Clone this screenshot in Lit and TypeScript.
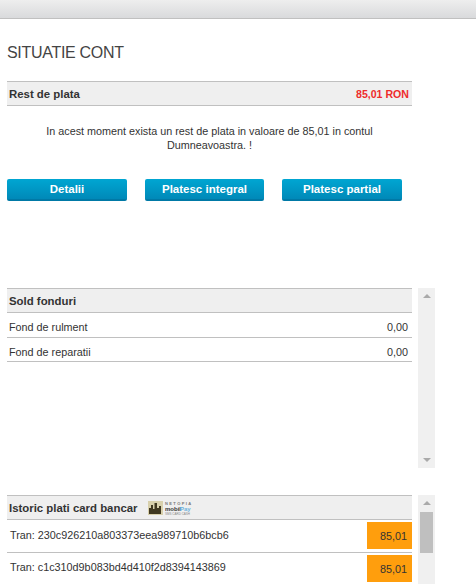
import { LitElement, html, css } from "lit";
import { customElement } from "lit/decorators.js";

@customElement("app-root")
export class AppRoot extends LitElement {
  static styles = css`
    :host { display: block; width: 476px; height: 584px; overflow: hidden; background: #fff; font-family: "Liberation Sans", Arial, sans-serif; font-size: 10px; color: #333; }
    .top { height: 18px; background: linear-gradient(#eeeeee, #d9dadc); border-bottom: 1px solid #c0c0c0; }
    .content { padding: 0 0 0 7px; width: 405px; }
    h1 { margin: 24px 0 0; height: 38px; font-weight: normal; font-size: 16px; letter-spacing: -0.3px; line-height: 19px; color: #444; }
    .head { height: 23px; display: flex; align-items: center; justify-content: space-between; padding: 0 3px 0 2px; background: #efefef; border-top: 1px solid #c0c0c0; border-bottom: 1px solid #c0c0c0; font-weight: bold; font-size: 11.4px; }
    .red { color: #ee2c2c; font-size: 10.6px; }
    .msg { margin: 18px 0 0; text-align: center; line-height: 14px; padding: 0 30px; font-size: 10.8px; }
    .btns { margin-top: 27px; display: flex; gap: 18px; }
    .btn { width: 120px; height: 22px; box-sizing: border-box; border-radius: 2px; background: linear-gradient(#00a6d2, #0089b8); border-bottom: 2px solid #0079a6; color: #fff; font-weight: bold; font-size: 11.5px; display: flex; align-items: center; justify-content: center; }
    .btn.mid { width: 119px; }
    .panel { display: grid; grid-template-columns: 405px 17px; column-gap: 6px; width: 428px; }
    .sold { margin-top: 87px; height: 180px; }
    .istoric { margin-top: 27px; height: 89px; }
    .row { box-sizing: border-box; height: 24px; padding: 5px 4px 0 2px; display: flex; align-items: center; justify-content: space-between; border-bottom: 1px solid #c0c0c0; font-size: 10.8px; }
    .row.first { height: 25px; padding-top: 4px; }
    .row.tran { height: 33px; padding: 2px 0 0 3px; align-items: flex-start; }
    .row.tran > .code { line-height: 27px; font-size: 10.8px; }
    .row.tran.second > .code { margin-top: -1px; }
    .amount { width: 45px; height: 27px; display: flex; align-items: center; justify-content: flex-end; padding-right: 5px; box-sizing: border-box; background: #ff9e0d; }
    .title { display: flex; align-items: center; gap: 10px; }
    .scroll { background: #f0f0f0; display: flex; flex-direction: column; justify-content: space-between; align-items: center; padding: 6px 0; box-sizing: border-box; position: relative; }
    .thumb { position: absolute; left: 2px; top: 17px; width: 13px; height: 41px; background: #bfbfbf; }
    svg { display: block; }
    .lg1 { font: bold 4px "Liberation Sans", sans-serif; letter-spacing: 1.4px; fill: #777; }
    .lg2 { font: bold 6px "Liberation Sans", sans-serif; fill: #333; }
    .lg3 { font: bold 6px "Liberation Sans", sans-serif; fill: #6fb4dd; }
    .lg4 { font: 3px "Liberation Sans", sans-serif; fill: #888; }
  `;

  private up() { return html`<svg width="8" height="4" viewBox="0 0 8 4"><path d="M4 0L8 4H0Z" fill="#aaa"/></svg>`; }
  private down() { return html`<svg width="8" height="4" viewBox="0 0 8 4"><path d="M0 0H8L4 4Z" fill="#aaa"/></svg>`; }

  render() {
    return html`
      <div class="top"></div>
      <div class="content">
        <h1>SITUATIE CONT</h1>
        <div class="head"><span>Rest de plata</span><span class="red">85,01 RON</span></div>
        <p class="msg">In acest moment exista un rest de plata in valoare de 85,01 in contul Dumneavoastra. !</p>
        <div class="btns">
          <div class="btn">Detalii</div>
          <div class="btn mid">Platesc integral</div>
          <div class="btn">Platesc partial</div>
        </div>
        <div class="panel sold">
          <div>
            <div class="head"><span>Sold fonduri</span></div>
            <div class="row first"><span>Fond de rulment</span><span>0,00</span></div>
            <div class="row"><span>Fond de reparatii</span><span>0,00</span></div>
          </div>
          <div class="scroll">${this.up()}${this.down()}</div>
        </div>
        <div class="panel istoric">
          <div>
            <div class="head">
              <span class="title">Istoric plati card bancar
                <svg width="46" height="15" viewBox="0 0 46 15">
                  <rect x="0" y="1" width="15" height="14" fill="#d8d0ac"/>
                  <path d="M1 14V8h2V5h2v4h1.5V3H9v5h2V6h2v8Z" fill="#3f3820"/>
                  <text class="lg1" x="17" y="5">NETOPIA</text>
                  <text class="lg2" x="17" y="11">mobil</text>
                  <text class="lg3" x="32" y="11">Pay</text>
                  <text class="lg4" x="17" y="15">SMS CARD CASH</text>
                </svg>
              </span>
            </div>
            <div class="row tran"><span class="code">Tran: 230c926210a803373eea989710b6bcb6</span><span class="amount">85,01</span></div>
            <div class="row tran second"><span class="code">Tran: c1c310d9b083bd4d410f2d8394143869</span><span class="amount">85,01</span></div>
          </div>
          <div class="scroll">${this.up()}<div class="thumb"></div></div>
        </div>
      </div>
    `;
  }
}
